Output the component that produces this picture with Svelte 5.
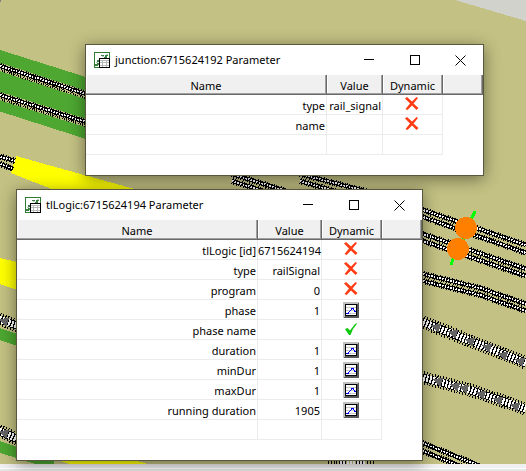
<script>
  const windows = [
    {
      id: 'junction',
      title: 'junction:6715624192 Parameter',
      rows: [
        { name: 'type', value: 'rail_signal', dynamic: 'no' },
        { name: 'name', value: '', dynamic: 'no' },
        { name: '', value: '', dynamic: '' }
      ]
    },
    {
      id: 'logic',
      title: 'tlLogic:6715624194 Parameter',
      rows: [
        { name: 'tlLogic [id]', value: '6715624194', dynamic: 'no' },
        { name: 'type', value: 'railSignal', dynamic: 'no' },
        { name: 'program', value: '0', dynamic: 'no' },
        { name: 'phase', value: '1', dynamic: 'plot' },
        { name: 'phase name', value: '', dynamic: 'yes' },
        { name: 'duration', value: '1', dynamic: 'plot' },
        { name: 'minDur', value: '1', dynamic: 'plot' },
        { name: 'maxDur', value: '1', dynamic: 'plot' },
        { name: 'running duration', value: '1905', dynamic: 'plot' },
        { name: '', value: '', dynamic: '' }
      ]
    }
  ];

  const narrowTracks = [
    'M0 66L86 94', 'M0 95L86 122',
    'M-2 156L15 161', 'M-2 163L13 169',
    'M232 174L423 234L526 269', 'M232 181L423 241L526 276',
    'M300 174L373 193L423 210L526 245', 'M300 181L423 217L526 253',
    'M423 274L480 288L526 304', 'M423 281L480 295L526 311',
    'M420 442L480 466', 'M420 450L470 470'
  ];
  const wideTracks = [
    'M-4 318L18 326', 'M-4 430L18 439',
    'M420 321L526 363', 'M420 377L470 390L526 409'
  ];
  const arrows = [
    [436, 327], [453, 333], [470, 341], [487, 347], [503, 355], [520, 361],
    [438, 381], [455, 386], [464, 388], [481, 394], [498, 400], [515, 406],
    [4, 321], [4, 433]
  ];
</script>

<main class="app">
  <div class="map">
    <svg class="network" viewBox="0 0 526 464" preserveAspectRatio="xMinYMin slice" shape-rendering="crispEdges" aria-hidden="true">
      <path fill="#d2d2cd" d="M455 0H526V21Z" />
      <path fill="#808080" d="M0 0h1v2h-1z" />
      <path fill="#4da731" d="M0 50L86 77V139L0 111.500ZM0 328L17 334V346L0 340ZM0 441L17 447V458L0 453ZM22 460H54V464H36Z" />
      <path stroke="#c3c183" stroke-width="8" fill="none" d="M0 67L86 95M0 96L86 123" />
      <path fill="#ff0" d="M16 156L138 190H54L11 173ZM0 258L17 262V290L0 284ZM58 460H134L148 464H69Z" />
      {#each narrowTracks as d}
        <path class="narrow ties" {d} />
        <path class="narrow bed" {d} />
        <path class="narrow gaps" {d} />
      {/each}
      <path class="dots" d="M2 71L86 98M2 100L86 126" />
      {#each wideTracks as d}
        <path class="wide ties" {d} />
        <path class="wide bed" {d} />
        <path class="wide gaps" {d} />
      {/each}
      <path class="wide ties" d="M328 463H374" />
      <path class="wide gaps" d="M340 464H366" />
      {#each arrows as [x, y]}
        <path fill="#646464" d="M-5 0L4 -5L4 5Z" transform="translate({x} {y}) rotate(18)" />
      {/each}
      <path stroke="#0f0" stroke-width="3" d="M475 211L471 220M463 236V241M454 256L451 265" />
      <circle cx="466" cy="228" r="11" fill="#ff8000" />
      <circle cx="458" cy="249" r="11" fill="#ff8000" />
    </svg>
  </div>
  <div class="status"></div>

  {#each windows as win}
    <section class="window {win.id}" aria-label={win.title}>
      <header>
        <svg class="logo" width="16" height="16" viewBox="0 0 16 16" shape-rendering="crispEdges" aria-hidden="true">
          <path fill="#fff" stroke="#2e7d32" d="M.5 .5h15v15H.5z" />
          <path fill="#3a8040" d="M1 12h2v-1h2v2H4v1H1zM3 8h2V7h2V6h3V5h1V3h3v1h-1v2h-2v1H7v2H5v1H3zM7 3h3v1H7z" />
          <path fill="#b4d0b4" d="M5 10h1v1H5zM8 4h2v1H8zM12 2h2v1h-2zM2 10h2v1H2z" />
          <path fill="#fff" stroke="#000" d="M5.500 6.500h10v9h-10z" />
          <path fill="none" stroke="#b8b8b8" d="M6 8.500h9M6 10.500h9M6 13.500h9M8.500 8v7M12.500 8v7" />
        </svg>
        <h1>{win.title}</h1>
        <div class="controls">
          <button type="button" aria-label="Minimize"><svg width="11" height="11" viewBox="0 0 11 11"><path d="M1 4.500h10" /></svg></button>
          <button type="button" aria-label="Maximize"><svg width="11" height="11" viewBox="0 0 11 11"><path d="M1 .5h9v9h-9z" shape-rendering="crispEdges" /></svg></button>
          <button type="button" aria-label="Close"><svg width="11" height="11" viewBox="0 0 11 11"><path d="M.5 .5l10 10M10.500 .5l-10 10" /></svg></button>
        </div>
      </header>
      <table>
        <colgroup><col /><col class="value-col" /><col class="dynamic-col" /><col class="rest-col" /></colgroup>
        <thead>
          <tr><th scope="col">Name</th><th scope="col">Value</th><th scope="col">Dynamic</th><td></td></tr>
        </thead>
        <tbody>
          {#each win.rows as row}
            <tr>
              <td>{row.name}</td>
              <td>{row.value}</td>
              <td class="dynamic">
                {#if row.dynamic === 'no'}
                  <svg class="mark" width="16" height="16" viewBox="0 0 16 16" role="img" aria-label="no">
                    <path fill="#ff3c14" d="M1 2.500L3 1L8 5.500L12.500 1L14 2L9.500 7.500L14.500 12L12.500 14L8 9.500L3.500 14L1.500 13L6 7.500Z" />
                  </svg>
                {:else if row.dynamic === 'yes'}
                  <svg class="mark" width="16" height="16" viewBox="0 0 16 16" role="img" aria-label="yes">
                    <path fill="#0ac80a" d="M2 8L4.500 7L7 9.500L12 3L14.500 2L10 8L7.500 14H6Z" />
                  </svg>
                {:else if row.dynamic === 'plot'}
                  <button type="button" class="plot" aria-label="Plot {row.name}">
                    <svg width="16" height="16" viewBox="0 0 16 16" shape-rendering="crispEdges">
                      <path fill="#c0c0c0" d="M0 0h16v16H0z" />
                      <path fill="#555" d="M15 1h1v15H1v-1h1v-1h12V2h1z" />
                      <path fill="#fff" stroke="#000" d="M2.500 2.500h11v11h-11z" />
                      <path stroke="#c8c8c8" d="M3 5.500h10M3 8.500h10M3 11.500h10" />
                      <path fill="none" stroke="#0000e6" d="M3 11.500h2L9 6.500h1l2 3h1" />
                    </svg>
                  </button>
                {/if}
              </td>
              <td></td>
            </tr>
          {/each}
        </tbody>
      </table>
    </section>
  {/each}
</main>

<style>
  .app {
    position: relative;
    display: flex;
    flex-direction: column;
    height: 100vh;
    overflow: hidden;
    font: 11px/20px 'Noto Sans', 'Open Sans', sans-serif;
    color: #000;
  }
  .map {
    flex: 1;
    min-height: 0;
    background: #c3c183;
  }
  .network {
    display: block;
    width: 100%;
    height: 100%;
  }
  .narrow, .wide, .dots {
    fill: none;
    stroke: #000;
  }
  .narrow.ties { stroke-width: 6; stroke-dasharray: 1 1.4; }
  .narrow.bed { stroke-width: 4; }
  .narrow.gaps { stroke: #fff; stroke-width: 2; stroke-dasharray: 1.5 1.3; }
  .dots { stroke-width: 2; stroke-dasharray: 1 1.4; }
  .wide.ties { stroke-width: 13; stroke-dasharray: 1 1.8; }
  .wide.bed { stroke-width: 8; }
  .wide.gaps { stroke: #fff; stroke-width: 7; stroke-dasharray: 2 1.3; }
  .status {
    height: 7px;
    box-sizing: border-box;
    background: linear-gradient(#f0f0f0 4px, #fff 4px, #fff 5px, #e6e6e6 5px);
  }
  .window {
    position: absolute;
    padding-bottom: 20px;
    border: 1px solid #5a5940;
    background: #fff;
    box-shadow: 0 3px 15px rgba(0, 0, 0, 0.45);
  }
  .junction { left: 85px; top: 44px; --value: 56px; }
  .logic { left: 16px; top: 189px; --value: 64px; }
  header {
    display: flex;
    align-items: center;
    height: 30px;
    padding-left: 8px;
  }
  .logo { flex: none; }
  h1 {
    flex: 1;
    margin: 0 0 0 5px;
    font-size: 11px;
    font-weight: 400;
    white-space: nowrap;
  }
  .controls { display: flex; }
  .controls button {
    display: grid;
    place-items: center;
    width: 46px;
    height: 30px;
    padding: 0;
    border: 0;
    background: none;
  }
  .controls path { fill: none; stroke: #000; }
  table {
    table-layout: fixed;
    width: calc(341px + var(--value));
    border-collapse: separate;
    border-spacing: 0;
  }
  .value-col { width: var(--value); }
  .dynamic-col { width: 60px; }
  .rest-col { width: 40px; }
  thead th, thead td {
    box-sizing: border-box;
    height: 20px;
    padding: 2px 0 0;
    border-right: 1px solid #696969;
    border-bottom: 1px solid #696969;
    background: #f0f0f0;
    box-shadow: inset -1px -1px #a0a0a0, inset 1px 0 #fff;
    font-weight: 400;
    line-height: 17px;
    text-align: center;
  }
  tbody td {
    box-sizing: border-box;
    height: 20px;
    padding: 2px 1px 0 0;
    border-right: 1px solid #ececec;
    border-bottom: 1px solid #ececec;
    line-height: 17px;
    text-align: right;
    white-space: nowrap;
  }
  tbody td:last-child { border: 0; }
  tbody .dynamic { padding: 1px 1px 0 0; vertical-align: top; }
  .mark, .plot { display: block; margin: 0 auto; }
  .plot {
    width: 16px;
    height: 16px;
    margin-top: 1px;
    padding: 0;
    border: 0;
    background: none;
  }
  .plot svg { display: block; }
</style>
